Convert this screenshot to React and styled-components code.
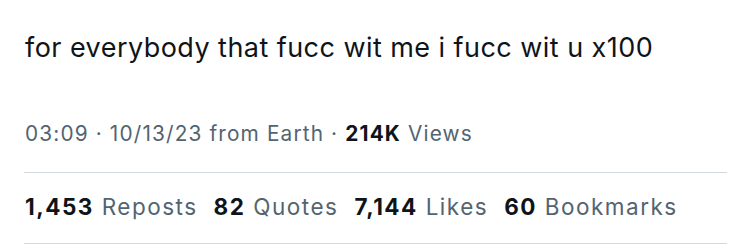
import React from "react";
import styled, { createGlobalStyle } from "styled-components";

const Global = createGlobalStyle`
  html, body { margin: 0; padding: 0; background: #ffffff; }
  body { font-family: Inter, "Noto Sans", sans-serif; -webkit-font-smoothing: antialiased; }
`;

const Tweet = styled.article`
  width: 750px;
  height: 249px;
  box-sizing: border-box;
  padding: 32px 23px 0 24px;
  display: flex;
  flex-direction: column;
  overflow: hidden;
`;

const Body = styled.p`
  margin: 0 0 0 1px;
  font-size: 27px;
  line-height: 32px;
  letter-spacing: 0.45px;
  color: #0f1419;
`;

const Meta = styled.div`
  margin: 58px 0 26px 1px;
  font-size: 20.8px;
  line-height: 24px;
  letter-spacing: 1.15px;
  color: #536471;
`;

const Strong = styled.span`
  font-weight: 700;
  color: #0f1419;
`;

const Divider = styled.hr`
  margin: 0;
  border: 0;
  height: 1px;
  background: #d3d8dc;
`;

const Stats = styled.div`
  display: flex;
  gap: 16px;
  height: 70px;
  box-sizing: border-box;
  padding: 0 0 2px 1px;
  line-height: 68px;
`;

const Stat = styled.span`
  font-size: 22.5px;
  letter-spacing: 1.5px;
  color: #536471;
  white-space: nowrap;
`;

const stats = [
  ["1,453", "Reposts"],
  ["82", "Quotes"],
  ["7,144", "Likes"],
  ["60", "Bookmarks"],
];

export default function App() {
  return (
    <>
      <Global />
      <Tweet>
        <Body>for everybody that fucc wit me i fucc wit u x100</Body>
        <Meta>
          03:09 · 10/13/23 from Earth · <Strong>214K</Strong> Views
        </Meta>
        <Divider />
        <Stats>
          {stats.map(([n, label]) => (
            <Stat key={label}>
              <Strong>{n}</Strong> {label}
            </Stat>
          ))}
        </Stats>
        <Divider />
      </Tweet>
    </>
  );
}
